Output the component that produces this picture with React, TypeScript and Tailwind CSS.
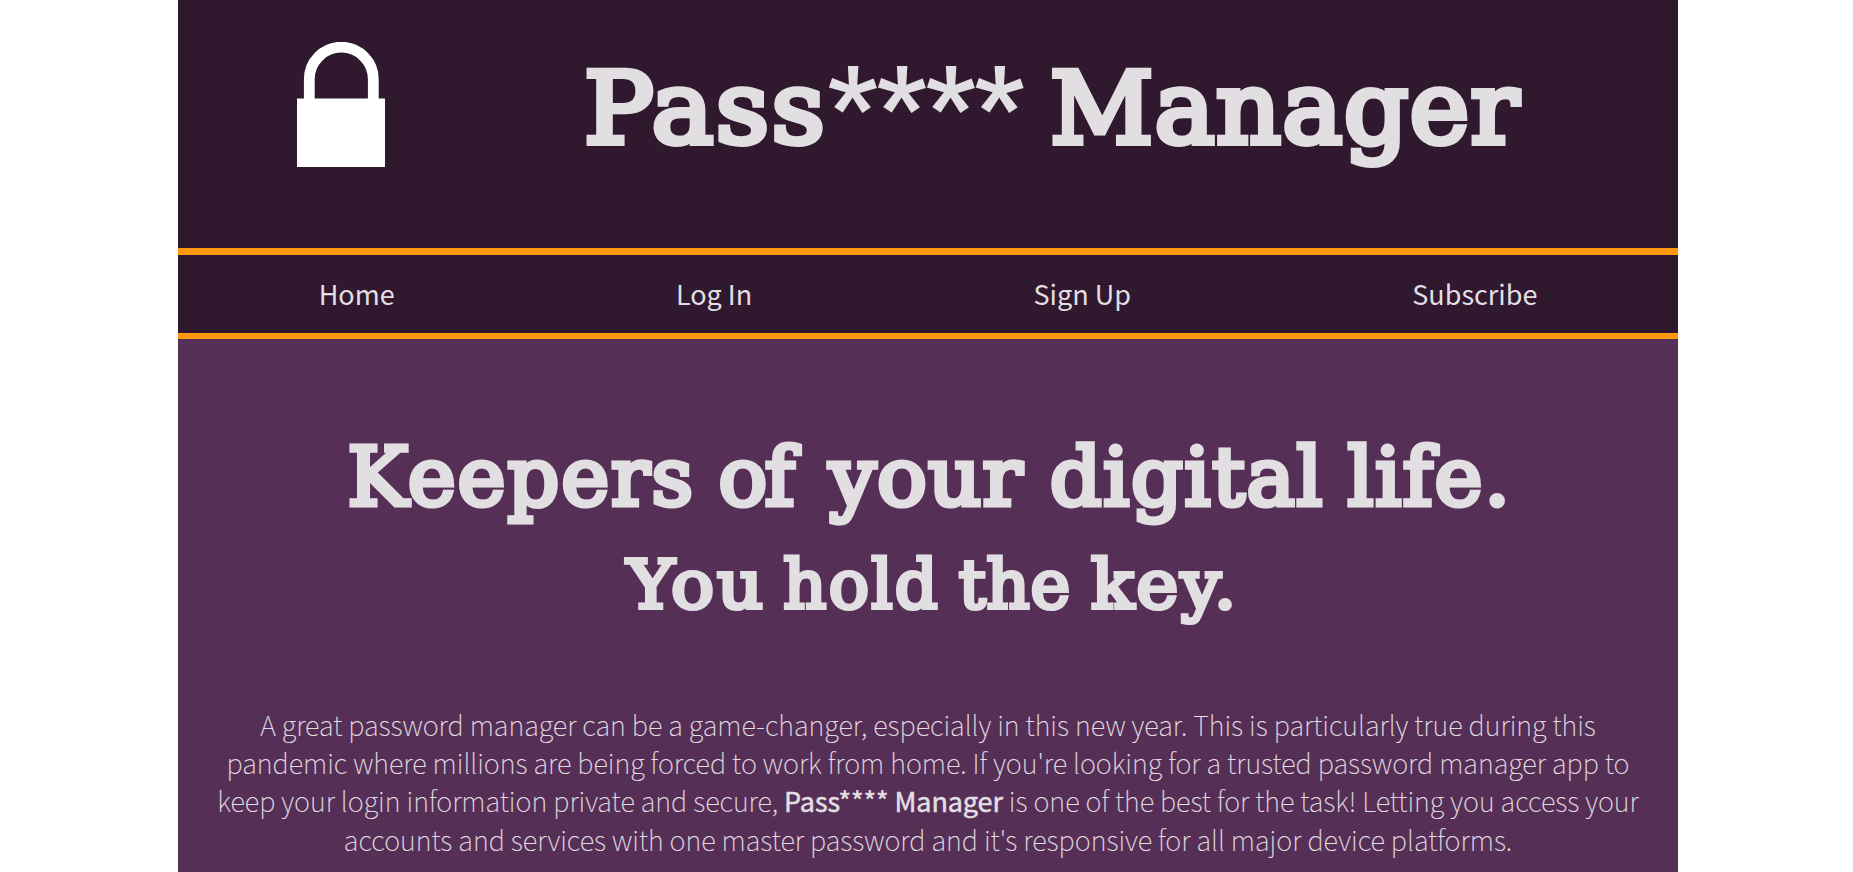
type Word = { text: string; className: string };

const title: Word[] = [
  { text: "Pass", className: "w-[244px] origin-left scale-x-[1.05] tracking-[2.2px]" },
  {
    text: "**** ",
    className:
      "w-[222.5px] font-['Roboto'] font-bold text-[110px] tracking-[-1px] [-webkit-text-stroke:0] relative top-[1px]",
  },
  { text: "Manager", className: "origin-left scale-x-[1.02] tracking-[1.2px]" },
];

const tagline: Word[] = [
  { text: "Keepers ", className: "w-[371px] tracking-[1.9px]" },
  { text: "of ", className: "w-[110.4px] tracking-[-2.4px]" },
  { text: "your ", className: "w-[220.8px] origin-left scale-x-[1.025] tracking-[1px]" },
  { text: "digital ", className: "w-[297.8px] tracking-[1.75px]" },
  { text: "life.", className: "tracking-[1.75px]" },
];

const subline: Word[] = [
  { text: "You ", className: "w-[156.8px] origin-left scale-x-[1.07] tracking-[2.7px]" },
  { text: "hold ", className: "w-[175.5px] tracking-[2.2px]" },
  { text: "the ", className: "w-[132px] tracking-[0.8px]" },
  { text: "key.", className: "origin-left scale-x-[1.06] tracking-[2.2px]" },
];

const links = ["Home", "Log In", "Sign Up", "Subscribe"];

function Words({ words }: { words: Word[] }) {
  return words.map((w) => (
    <span key={w.text} className={`block shrink-0 whitespace-pre ${w.className}`}>
      {w.text}
    </span>
  ));
}

function Lock() {
  return (
    <svg className="ml-[119px] mt-[42px] h-[125px] w-[88px] shrink-0" viewBox="0 0 88 125" fill="none">
      <path d="M12.3 60V37.2a32 32 0 0 1 64 0V60" stroke="#fff" strokeWidth="10.8" />
      <path d="M0 56.4h88V125H0z" fill="#fff" />
    </svg>
  );
}

export default function App() {
  return (
    <div className="h-[872px] overflow-hidden bg-white">
      <div className="ml-[178px] h-full w-[1500px] bg-[#552f55] text-[#e2dfe2]">
        <header className="flex h-[248px] bg-[#30192f]">
          <Lock />
          <h1 className="ml-[198.5px] mt-[46px] flex h-[120px] items-baseline font-['DejaVu_Serif',serif] text-[99px] leading-[120px] [-webkit-text-stroke:6px_#e2dfe2]">
            <Words words={title} />
          </h1>
        </header>
        <nav className="flex h-[91px] items-center justify-around border-t-[7px] border-b-[6px] border-[#ff980e] bg-[#30192f] font-['Noto_Sans_CJK_JP',sans-serif] text-[27px] leading-[38px]">
          {links.map((l) => (
            <a key={l} href="#">
              {l}
            </a>
          ))}
        </nav>
        <main>
          <h2 className="ml-[169.5px] mt-[90px] flex h-[96px] font-['DejaVu_Serif',serif] text-[81px] leading-[96px] [-webkit-text-stroke:5px_#e2dfe2]">
            <Words words={tagline} />
          </h2>
          <h3 className="ml-[448.5px] mt-[20px] flex h-[80px] font-['DejaVu_Serif',serif] text-[67px] leading-[80px] [-webkit-text-stroke:4.2px_#e2dfe2]">
            <Words words={subline} />
          </h3>
          <p className="mt-[80px] text-center font-['Noto_Sans_CJK_JP',sans-serif] text-[27.2px] font-thin leading-[38px] whitespace-nowrap [-webkit-text-stroke:0.2px_#e2dfe2]">
            A great password manager can be a game-changer, especially in this new year. This is particularly true during this
            <br />
            pandemic where millions are being forced to work from home. If you're looking for a trusted password manager app to
            <br />
            keep your login information private and secure,{" "}
            <strong className="text-[27px] font-normal tracking-[-0.1px] [-webkit-text-stroke:0.5px_#e2dfe2]">Pass**** Manager</strong> is one of
            the best for the task! Letting you access your
            <br />
            accounts and services with one master password and it's responsive for all major device platforms.
          </p>
        </main>
      </div>
    </div>
  );
}
